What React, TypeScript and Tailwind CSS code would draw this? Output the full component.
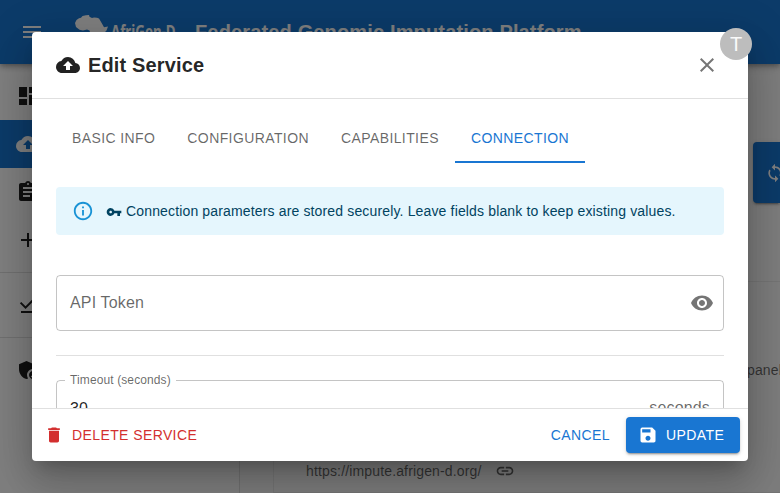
import type { ReactNode } from "react";
import {
  MdAdd,
  MdAdminPanelSettings,
  MdAssignment,
  MdClose,
  MdCloudUpload,
  MdDashboard,
  MdDelete,
  MdDownloadDone,
  MdLink,
  MdMenu,
  MdInfoOutline,
  MdSave,
  MdSync,
  MdVisibility,
  MdVpnKey,
} from "react-icons/md";

function NavItem({ children, active = false }: { children: ReactNode; active?: boolean }) {
  return (
    <div
      className={
        active
          ? "flex h-12 items-center bg-[#1976d2] px-4 text-2xl text-white"
          : "flex h-12 items-center px-4 text-2xl text-black/87"
      }
    >
      {children}
    </div>
  );
}

function Logo() {
  return (
    <div className="flex w-[104px] items-start text-white">
      <svg viewBox="0 0 34 36" className="h-9 w-[34px] shrink-0" fill="currentColor">
        <path d="M0 8 1.5 5 4 3.3 6 2.8 7.5 1 11 .2 14 0 14.5 1.8 17 3 19 2.4 22 2.8 24 3.6 25.5 6 27.5 9.5 29 12.2 33 11.6 31.5 15.5 28 19 28.5 24 26 27 24 32 20 34 18 30 17 24 15.5 19 14.5 15.5 12 14.6 8 15.4 4.5 14.8 1 12Z" />
      </svg>
      <span className="mt-1 ml-[2px] origin-left scale-x-[.74] font-['Noto_Sans',sans-serif] text-[18px] leading-6 font-bold whitespace-nowrap">
        AfriGen-D
      </span>
    </div>
  );
}

function Header() {
  return (
    <header className="relative flex h-16 shrink-0 items-center bg-[#1976d2] pl-5 text-white shadow-[0_2px_4px_-1px_rgba(0,0,0,.2),0_4px_5px_rgba(0,0,0,.14),0_1px_10px_rgba(0,0,0,.12)]">
      <MdMenu className="size-6 shrink-0" />
      <div className="mt-[2px] ml-[31px]">
        <Logo />
      </div>
      <h1 className="ml-4 text-xl leading-8 font-bold tracking-[.0075em] whitespace-nowrap">
        Federated Genomic Imputation Platform
      </h1>
    </header>
  );
}

function Page() {
  return (
    <div className="flex h-[493px] w-[780px] flex-col overflow-hidden bg-[#fafafa]">
      <Header />
      <div className="flex min-h-0 flex-1">
        <nav className="w-60 shrink-0 border-r border-black/12 bg-white pt-2">
          <NavItem><MdDashboard /></NavItem>
          <NavItem active><MdCloudUpload /></NavItem>
          <NavItem><MdAssignment /></NavItem>
          <NavItem><MdAdd /></NavItem>
          <hr className="my-2 border-black/12" />
          <NavItem><MdDownloadDone /></NavItem>
          <hr className="my-2 border-black/12" />
          <NavItem><MdAdminPanelSettings /></NavItem>
        </nav>
        <main className="flex w-[540px] shrink-0 flex-col overflow-hidden">
          <div className="mt-[78px] flex h-[61px] justify-end">
            <div className="flex w-[27px] items-center overflow-hidden rounded-l bg-[#1976d2] pl-3 text-white shadow-[0_3px_1px_-2px_rgba(0,0,0,.2),0_2px_2px_rgba(0,0,0,.14),0_1px_5px_rgba(0,0,0,.12)]">
              <MdSync className="size-5 shrink-0" />
            </div>
          </div>
          <section className="mt-[78px] ml-[33px] flex h-[212px] flex-col border-y border-l border-black/6">
            <p className="mt-[78px] flex h-5 justify-end overflow-hidden text-sm leading-5 tracking-[.01071em] text-black/60">
              <span className="w-[33px] whitespace-nowrap">panel</span>
            </p>
            <div className="mt-[81px] flex items-center pl-8 text-sm leading-5 tracking-[.01071em] text-black/60">
              <span>https://impute.afrigen-d.org/</span>
              <MdLink className="ml-[13px] size-5" />
            </div>
          </section>
        </main>
      </div>
    </div>
  );
}

function Tab({ label, active = false }: { label: string; active?: boolean }) {
  return (
    <button
      className={
        active
          ? "flex h-12 items-center border-b-2 border-[#1976d2] px-4 text-sm tracking-[.02857em] text-[#1976d2]"
          : "flex h-12 items-center px-4 pb-0.5 text-sm tracking-[.02857em] text-black/60"
      }
    >
      {label}
    </button>
  );
}

function EditServiceDialog() {
  return (
    <div
      role="dialog"
      className="flex h-[429px] w-[716px] flex-col overflow-hidden rounded bg-white text-black/87 shadow-[0_11px_15px_-7px_rgba(0,0,0,.2),0_24px_38px_3px_rgba(0,0,0,.14),0_9px_46px_8px_rgba(0,0,0,.12)]"
    >
      <div className="flex h-[67px] shrink-0 items-center border-b border-black/12 px-6">
        <MdCloudUpload className="size-6" />
        <h2 className="ml-2 flex-1 text-xl font-bold tracking-[.0075em]">Edit Service</h2>
        <button className="p-[5px] text-black/54">
          <MdClose className="size-6" />
        </button>
      </div>

      <div className="min-h-0 flex-1 overflow-hidden px-6 pt-4">
        <div className="flex">
          <Tab label="BASIC INFO" />
          <Tab label="CONFIGURATION" />
          <Tab label="CAPABILITIES" />
          <Tab label="CONNECTION" active />
        </div>

        <div className="mt-6 flex h-12 items-center rounded bg-[#e5f6fd] px-4 text-sm tracking-[.01071em] text-[#014361]">
          <MdInfoOutline className="size-[22px] text-[#0288d1] opacity-90" />
          <MdVpnKey className="mt-px ml-3 size-4" />
          <span className="ml-1">
            Connection parameters are stored securely. Leave fields blank to keep existing values.
          </span>
        </div>

        <div className="mt-10 flex h-14 items-center justify-between rounded border border-black/23 pr-[9px] pl-[13px] text-base tracking-[.00938em] text-black/60">
          <span>API Token</span>
          <MdVisibility className="size-6 text-black/54" />
        </div>

        <hr className="mt-6 border-black/12" />

        <fieldset className="mt-[15px] h-[65px] rounded border border-black/23 px-2">
          <legend className="px-[5px] text-xs leading-[18px] tracking-[.00938em] text-black/60">
            Timeout (seconds)
          </legend>
          <div className="flex items-start justify-between pt-[7px] pr-[5px] pl-[5px] text-base leading-6 tracking-[.00938em]">
            <span className="pt-px">30</span>
            <span className="text-black/60">seconds</span>
          </div>
        </fieldset>
      </div>

      <div className="flex h-[53px] shrink-0 items-center border-t border-black/12 px-2 text-sm tracking-[.02857em]">
        <button className="flex items-center px-1 text-[#d32f2f]">
          <MdDelete className="mr-2 size-5" />
          DELETE SERVICE
        </button>
        <div className="flex-1" />
        <button className="mr-4 text-[#1976d2]">CANCEL</button>
        <button className="flex h-9 w-[114px] items-center rounded bg-[#1976d2] pl-3 text-white shadow-[0_3px_1px_-2px_rgba(0,0,0,.2),0_2px_2px_rgba(0,0,0,.14),0_1px_5px_rgba(0,0,0,.12)]">
          <MdSave className="mr-2 size-5" />
          UPDATE
        </button>
      </div>
    </div>
  );
}

export default function App() {
  return (
    <div className="relative h-[493px] w-[780px] overflow-hidden font-['Liberation_Sans',Arial,sans-serif]">
      <Page />
      <div className="absolute inset-0 bg-black/50 p-8">
        <EditServiceDialog />
      </div>
      <div className="absolute top-7 left-[720px] flex size-8 items-center justify-center rounded-full bg-[#bdbdbd] text-xl leading-none text-[#fafafa]">
        T
      </div>
    </div>
  );
}
